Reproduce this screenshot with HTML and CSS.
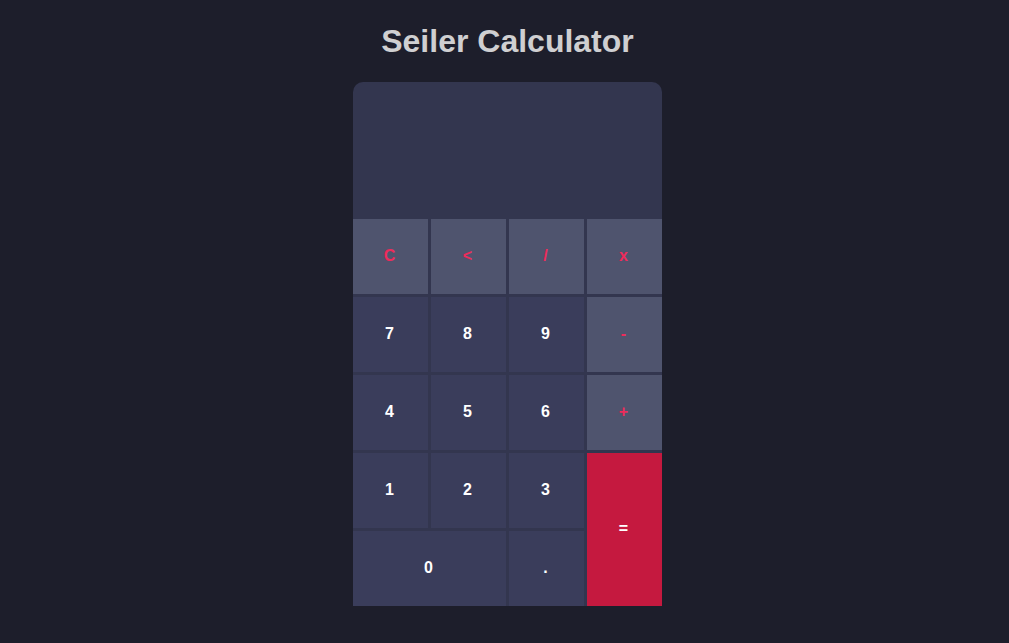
FILE: index.html
```html
<!DOCTYPE html>
<html>
<head>
<meta charset="utf-8">
<link rel="stylesheet" href="styles.css">
</head>
<body>
<h1 class="title">Seiler Calculator</h1>
<div class="calc">
  <div class="display"></div>
  <div class="keys">
    <button class="key fn">C</button>
    <button class="key fn">&lt;</button>
    <button class="key fn">/</button>
    <button class="key fn">x</button>
    <button class="key">7</button>
    <button class="key">8</button>
    <button class="key">9</button>
    <button class="key fn">-</button>
    <button class="key">4</button>
    <button class="key">5</button>
    <button class="key">6</button>
    <button class="key fn">+</button>
    <button class="key">1</button>
    <button class="key">2</button>
    <button class="key">3</button>
    <button class="key eq">=</button>
    <button class="key zero">0</button>
    <button class="key">.</button>
  </div>
</div>
</body>
</html>
```
FILE: styles.css
```css
html, body {
  margin: 0;
  padding: 0;
  background: #1d1e2b;
  font-family: "Liberation Sans", Arial, sans-serif;
}
body {
  display: flex;
  flex-direction: column;
  align-items: center;
  padding-left: 6px;
}
.title {
  margin: 23px 0 0;
  font-size: 32px;
  line-height: 37px;
  font-weight: bold;
  color: #cfcfd1;
}
.calc {
  margin-top: 22px;
  width: 309px;
  background: #33364f;
  border-radius: 10px 10px 0 0;
}
.display {
  height: 137px;
}
.keys {
  display: grid;
  grid-template-columns: repeat(4, 75px);
  grid-auto-rows: 75px;
  gap: 3px;
}
.key {
  border: none;
  margin: 0;
  padding: 0 2px 2px 0;
  background: #3a3d5b;
  color: #ffffff;
  font-family: "Liberation Sans", Arial, sans-serif;
  font-size: 16px;
  font-weight: bold;
}
.key.fn {
  background: #4f546e;
  color: #ee2b5b;
}
.key.eq {
  background: #c5193f;
  color: #ffffff;
  grid-row: span 2;
}
.key.zero {
  grid-column: span 2;
}
```
